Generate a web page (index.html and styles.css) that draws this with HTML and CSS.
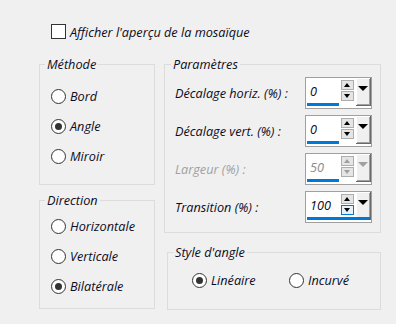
FILE: index.html
```html
<!DOCTYPE html>
<html lang="fr">
<head>
    <meta charset="UTF-8">
    <title>Mosaïque</title>
    <link rel="stylesheet" href="styles.css">
</head>
<body>
    <div class="dialog">
        <label class="check-row"><span class="checkbox"></span>Afficher l'aperçu de la mosaïque</label>

        <div class="columns">
            <div class="col">
                <fieldset class="group method">
                    <legend>Méthode</legend>
                    <div class="inner">
                        <div class="radio"><span class="dot"></span>Bord</div>
                        <div class="radio"><span class="dot on"></span>Angle</div>
                        <div class="radio"><span class="dot"></span>Miroir</div>
                    </div>
                </fieldset>
                <fieldset class="group direction">
                    <legend>Direction</legend>
                    <div class="inner">
                        <div class="radio"><span class="dot"></span>Horizontale</div>
                        <div class="radio"><span class="dot"></span>Verticale</div>
                        <div class="radio"><span class="dot on"></span>Bilatérale</div>
                    </div>
                </fieldset>
            </div>

            <div class="col">
                <fieldset class="group params">
                    <legend>Paramètres</legend>
                    <div class="inner">
                        <div class="param">
                            <span>Décalage horiz. (%) :</span>
                            <div class="spin">
                                <span class="value">0</span>
                                <div class="arrows"><span class="btn up"></span><span class="btn down"></span></div>
                                <span class="drop"></span>
                                <span class="bar"></span>
                            </div>
                        </div>
                        <div class="param">
                            <span>Décalage vert. (%) :</span>
                            <div class="spin">
                                <span class="value">0</span>
                                <div class="arrows"><span class="btn up"></span><span class="btn down"></span></div>
                                <span class="drop"></span>
                                <span class="bar"></span>
                            </div>
                        </div>
                        <div class="param disabled">
                            <span>Largeur (%) :</span>
                            <div class="spin">
                                <span class="value">50</span>
                                <div class="arrows"><span class="btn up"></span><span class="btn down"></span></div>
                                <span class="drop"></span>
                                <span class="bar"></span>
                            </div>
                        </div>
                        <div class="param">
                            <span>Transition (%) :</span>
                            <div class="spin">
                                <span class="value">100</span>
                                <div class="arrows"><span class="btn up"></span><span class="btn down hover"></span></div>
                                <span class="drop"></span>
                                <span class="bar full"></span>
                            </div>
                        </div>
                    </div>
                </fieldset>
                <fieldset class="group style">
                    <legend>Style d'angle</legend>
                    <div class="inner">
                        <div class="radio first"><span class="dot on"></span>Linéaire</div>
                        <div class="radio"><span class="dot"></span>Incurvé</div>
                    </div>
                </fieldset>
            </div>
        </div>
    </div>
</body>
</html>
```

FILE: styles.css
```css
body {
    margin: 0;
    background: #f0f0f0;
    font-family: "Open Sans", sans-serif;
    font-style: italic;
    font-size: 12.7px;
    color: #0c0c24;
}
.dialog {
    width: 396px;
    height: 324px;
    padding-left: 39px;
    box-sizing: border-box;
}
.check-row {
    display: flex;
    align-items: center;
    height: 15px;
    padding-top: 24px;
    margin-left: 12px;
}
.checkbox {
    width: 13px;
    height: 13px;
    border: 1px solid #333;
    background: #fff;
    margin-right: 4px;
}
.columns {
    display: flex;
    gap: 9px;
    margin-top: 17px;
}
.col {
    display: flex;
    flex-direction: column;
}
.group {
    margin: 0;
    padding: 0;
    border: 1px solid #dcdcdc;
    box-sizing: border-box;
    min-width: 0;
}
.group legend {
    padding: 0 2px;
    margin-left: 5px;
    line-height: 16px;
}
.method {
    width: 116px;
    height: 129px;
}
.method .inner {
    padding: 9px 0 0 11px;
}
.direction {
    width: 116px;
    height: 117px;
    margin-top: 7px;
}
.direction .inner {
    padding: 3px 0 0 11px;
}
.radio {
    display: flex;
    align-items: center;
    height: 30px;
}
.dot {
    width: 13px;
    height: 13px;
    border: 1px solid #333;
    border-radius: 50%;
    background: #fff;
    margin-right: 4px;
    position: relative;
}
.dot.on::after {
    content: "";
    position: absolute;
    left: 3px;
    top: 3px;
    width: 7px;
    height: 7px;
    border-radius: 50%;
    background: #333;
}
.params {
    width: 217px;
    height: 177px;
}
.params legend {
    margin-left: 6px;
}
.params .inner {
    padding: 5px 8px 0 10px;
    display: flex;
    flex-direction: column;
    gap: 6px;
}
.param {
    display: flex;
    align-items: center;
    justify-content: space-between;
    height: 32px;
}
.spin {
    position: relative;
    display: flex;
    width: 67px;
    height: 32px;
    border: 1px solid #a0a0a0;
    background: #fff;
    box-sizing: border-box;
}
.value {
    width: 29px;
    padding-left: 4px;
    height: 25px;
    line-height: 27px;
}
.arrows {
    display: flex;
    flex-direction: column;
    gap: 1px;
    margin: 2px 0 0 2px;
}
.btn {
    position: relative;
    width: 11px;
    height: 8px;
    border: 1px solid #adadad;
    background: #e5e5e5;
}
.btn::after {
    content: "";
    position: absolute;
    left: 2px;
    border-left: 3.5px solid transparent;
    border-right: 3.5px solid transparent;
}
.btn.up::after {
    top: 2px;
    border-bottom: 4px solid #000;
}
.btn.down::after {
    top: 2px;
    border-top: 4px solid #000;
}
.btn.hover {
    background: #e5f1fb;
    border-color: #0078d7;
}
.drop {
    position: relative;
    width: 15px;
    height: 28px;
    margin-left: 2px;
    background: #f0f0f0;
    box-sizing: border-box;
    box-shadow: inset -1px -1px #696969, inset 1px 1px #fff, inset -2px -2px #a0a0a0;
}
.drop::after {
    content: "";
    position: absolute;
    left: 2px;
    top: 8px;
    border-left: 5px solid transparent;
    border-right: 5px solid transparent;
    border-top: 5px solid #000;
}
.bar {
    position: absolute;
    left: 1px;
    top: 25px;
    width: 32px;
    height: 3px;
    background: #0078d7;
}
.bar.full {
    width: 63px;
}
.disabled {
    color: #a0a0a0;
}
.disabled .value {
    color: #8a8a8a;
}
.disabled .btn.up::after {
    border-bottom-color: #a0a0a0;
}
.disabled .btn.down::after {
    border-top-color: #a0a0a0;
}
.disabled .drop::after {
    border-top-color: #a0a0a0;
}
.style {
    width: 214px;
    height: 66px;
    margin: 11px 0 0 3px;
}
.style .inner {
    display: flex;
    padding: 5px 0 0 24px;
}
.radio.first {
    width: 97px;
}
```
